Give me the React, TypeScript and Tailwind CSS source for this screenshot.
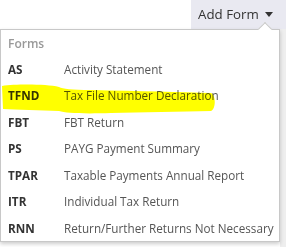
import React from 'react';

const forms: { code: string; name: string }[] = [
  { code: 'AS', name: 'Activity Statement' },
  { code: 'TFND', name: 'Tax File Number Declaration' },
  { code: 'FBT', name: 'FBT Return' },
  { code: 'PS', name: 'PAYG Payment Summary' },
  { code: 'TPAR', name: 'Taxable Payments Annual Report' },
  { code: 'ITR', name: 'Individual Tax Return' },
  { code: 'RNN', name: 'Return/Further Returns Not Necessary' },
];

const App: React.FC = () => {
  return (
    <div className="relative w-[286px] h-[247px] bg-white overflow-hidden" style={{ fontFamily: '"Open Sans", sans-serif' }}>
      <div className="flex justify-end h-[29px]">
        <button className="flex items-center gap-[6px] w-[95px] h-full pl-[7px] bg-[#e9e9f1] text-[#333] text-[13.3px]">
          <span>Add Form</span>
          <svg width="8" height="5" viewBox="0 0 8 5">
            <path d="M0 0 L8 0 L4 5 Z" fill="#333" />
          </svg>
        </button>
      </div>
      <div className="flex h-[218px]">
        <div className="relative w-[280px] h-[213px] bg-white border border-[#c8c8c8] shadow-[0_2px_4px_rgba(0,0,0,0.2)]">
          <div className="absolute -top-[6px] right-[9px] w-[10px] h-[10px] bg-white border-l border-t border-[#c8c8c8] rotate-45" />
          <div className="px-[7px] pt-[5px] text-[12px] font-semibold text-[#999]">Forms</div>
          <div className="pt-[3px]">
            {forms.map(f => (
              <div key={f.code} className="flex items-center h-[26.6px] px-[7px] text-[11.7px] whitespace-nowrap">
                <span className="w-[56px] shrink-0 font-bold text-[#333]">{f.code}</span>
                <span className="text-[#555]">{f.name}</span>
              </div>
            ))}
          </div>
          <svg className="absolute left-0 top-0 pointer-events-none mix-blend-multiply" width="280" height="214">
            <path d="M1 56 C15 54 45 54 58 57 C62 59 70 60 90 60 C140 61 180 62 210 63 C215 65 215 79 210 81 C180 82 140 82 110 83 C80 84 65 83 58 81 C40 80 15 80 2 79 Z" fill="#ffff00" />
          </svg>
        </div>
        <div className="flex-1 bg-[#eeeeee]" />
      </div>
    </div>
  );
};

export default App;
